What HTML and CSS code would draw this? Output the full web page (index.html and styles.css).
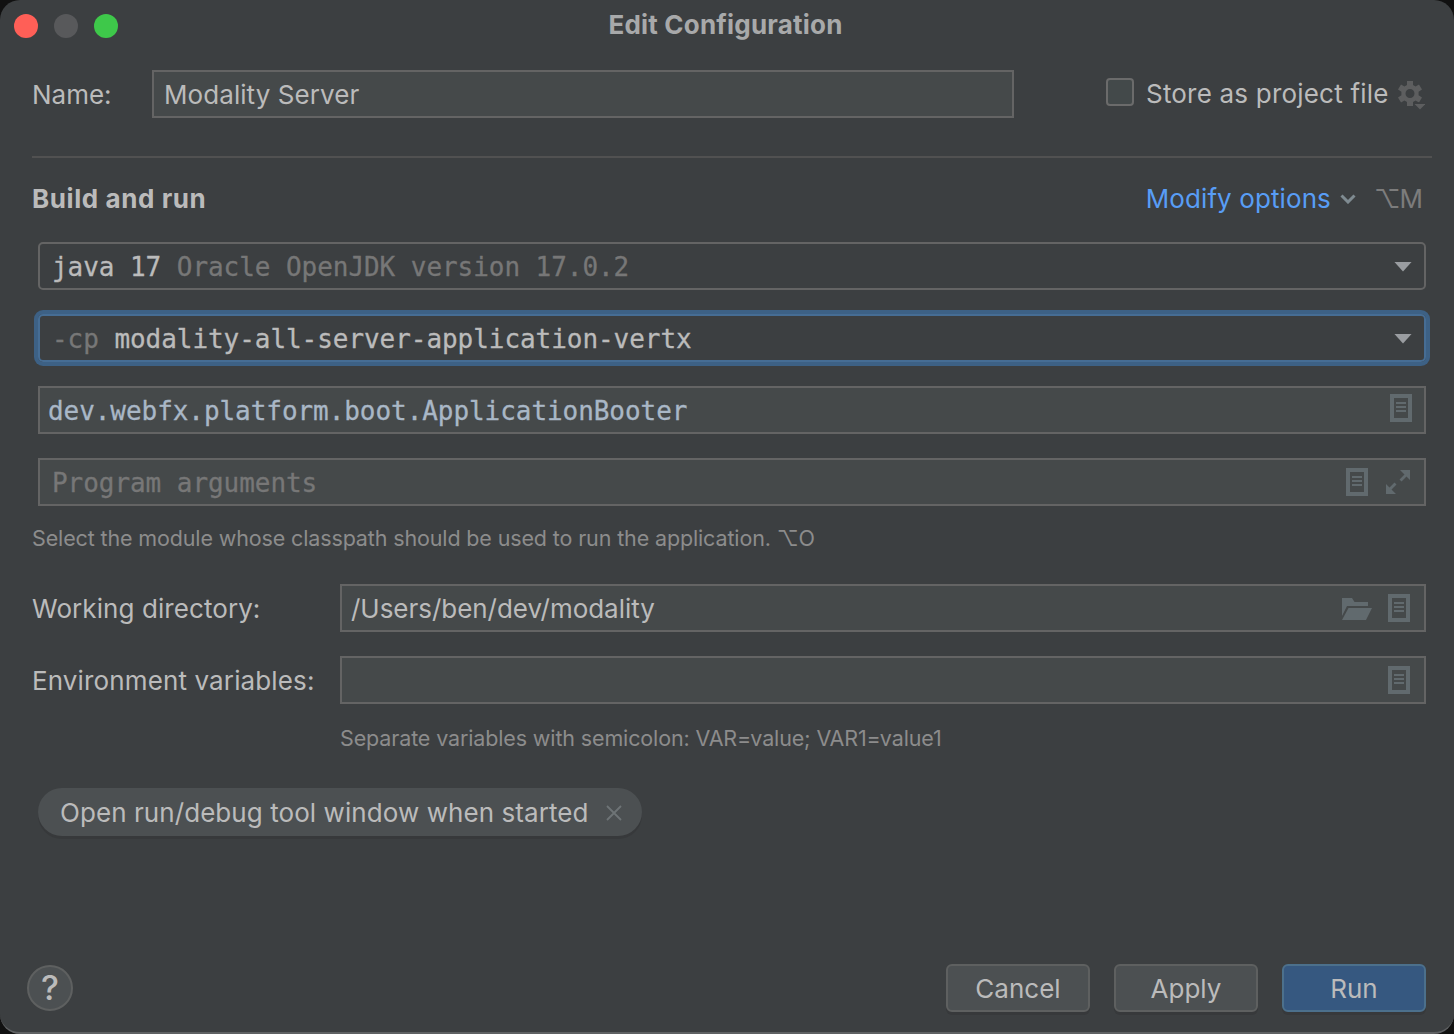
FILE: index.html
```html
<!DOCTYPE html>
<html lang="en">
<head>
<meta charset="utf-8">
<title>Edit Configuration</title>
<link rel="stylesheet" href="styles.css">
</head>
<body>
<svg class="sprite" aria-hidden="true">
  <symbol id="doc" viewBox="0 0 22 28"><path fill-rule="evenodd" d="M0 0h22v28H0zM4 4v20h14V4z"/><path d="M6 8h10v2H6zM6 12h10v2H6zM6 16h10v2H6z"/></symbol>
</svg>
<main class="window">
  <header class="titlebar">
    <div class="lights"><i class="light close"></i><i class="light minimize"></i><i class="light zoom"></i></div>
    <h1 class="title">Edit Configuration</h1>
  </header>

  <section class="name-row">
    <label class="name-label">Name:</label>
    <div class="field name-field"><span class="t name-value">Modality Server</span></div>
    <div class="store">
      <i class="checkbox"></i>
      <span class="t store-label">Store as project file</span>
      <svg class="gear" viewBox="0 0 28 30" width="28" height="30">
        <path fill-rule="evenodd" d="M10 1h6v4l2.500 1.400L22 4.500l3 5-3.400 2.200v3.600L25 17.500l-3 5-3.500-1.900L16 22v4h-6v-4l-2.500-1.400L4 22.500l-3-5 3.400-2.200v-3.600L1 9.500l3-5 3.500 1.900L10 5zM13 9a4.500 4.500 0 1 0 0 9 4.500 4.500 0 0 0 0-9z"/>
        <path d="M16.500 22.500h13L23 30z" class="gear-gap"/><path d="M17.500 24h11L23 29.500z"/>
      </svg>
    </div>
  </section>

  <section class="build-head">
    <h2 class="heading">Build and run</h2>
    <a class="modify"><span class="t modify-text">Modify options</span>
      <svg viewBox="0 0 16 10" width="16" height="10"><path d="M1.500 1.500L8 8l6.500-6.500"/></svg></a>
    <span class="t shortcut">⌥M</span>
  </section>

  <section class="run-fields">
    <div class="combo"><span class="t mono"><b>java 17</b> Oracle OpenJDK version 17.0.2</span><i class="arrow"></i></div>
    <div class="combo focused"><span class="t mono">-cp <b>modality-all-server-application-vertx</b></span><i class="arrow"></i></div>
    <div class="field code"><span class="t mono main-class">dev.webfx.platform.boot.ApplicationBooter</span><svg class="doc up" width="22" height="28"><use href="#doc"/></svg></div>
    <div class="field code args"><span class="t mono">Program arguments</span>
      <span class="icons"><svg class="doc" width="22" height="28"><use href="#doc"/></svg>
      <svg class="expand" viewBox="0 0 24 24" width="24" height="24"><path d="M14 0h10v10l-3.500-3.500-5 5-2-2 5-5zM0 24V14l3.500 3.500 5-5 2 2-5 5L10 24z"/></svg></span>
    </div>
  </section>
  <p class="hint module-hint">Select the module whose classpath should be used to run the application. ⌥O</p>

  <section class="env">
    <label class="wd-label">Working directory:</label>
    <div class="field"><span class="t path">/Users/ben/dev/modality</span>
      <span class="icons wd-icons"><svg class="folder" viewBox="0 0 30 22" width="30" height="22"><path d="M0 0h10l2.500 4H26v4H5L0 18z"/><path d="M6.500 10H30l-6 12H0z"/></svg>
      <svg class="doc" width="22" height="28"><use href="#doc"/></svg></span></div>
    <label class="env-label">Environment variables:</label>
    <div class="field"><span class="icons"><svg class="doc" width="22" height="28"><use href="#doc"/></svg></span></div>
  </section>
  <p class="hint env-hint">Separate variables with semicolon: VAR=value; VAR1=value1</p>

  <div class="tag"><span class="t">Open run/debug tool window when started</span>
    <svg viewBox="0 0 16 16" width="16" height="16"><path d="M1 1l14 14M15 1L1 15"/></svg></div>

  <footer class="footer">
    <span class="help">?</span>
    <div class="buttons">
      <span class="btn">Cancel</span><span class="btn">Apply</span><span class="btn primary">Run</span>
    </div>
  </footer>
</main>
</body>
</html>
```
FILE: styles.css
```css
* { box-sizing: border-box; }
body { margin: 0; background: #111; font-family: Inter, "Noto Sans", sans-serif; font-size: 26px; line-height: 32px; color: #bbb; }
h1, h2, p { margin: 0; }
.sprite { display: none; }
.t { white-space: pre; }
.window { width: 1454px; height: 1034px; background: #3c3f41; border-bottom: 2px solid #5f6163; border-radius: 20px; overflow: hidden; display: flex; flex-direction: column; }
.titlebar { height: 50px; flex: none; display: grid; grid-template-columns: 200px 1fr 200px; align-items: center; }
.lights { display: flex; gap: 16px; padding: 2px 0 0 14px; }
.light { width: 24px; height: 24px; border-radius: 50%; }
.close { background: #ff5f57; }
.minimize { background: #58595b; }
.zoom { background: #3ec84a; }
.title { font-size: 26px; font-weight: 700; letter-spacing: 0.2px; color: #a8a9aa; text-align: center; padding-right: 3px; }
.name-row { flex: none; height: 108px; margin: 0 22px 0 32px; padding-top: 20px; border-bottom: 2px solid #515151; display: flex; align-items: flex-start; }
.name-label { width: 120px; padding-top: 9px; }
.field { height: 48px; border: 2px solid #646464; background: #45494a; display: flex; align-items: center; justify-content: space-between; padding: 0 14px 0 10px; }
.name-field { width: 862px; }
.name-value { letter-spacing: 0.07px; padding-top: 2px; }
.store { margin-left: 92px; display: flex; align-items: flex-start; padding-top: 7px; }
.checkbox { width: 28px; height: 28px; margin: 1px 12px 0 0; border: 2px solid #6b6b6b; border-radius: 4px; background: #43494a; }
.store-label { width: 242px; letter-spacing: 0.2px; padding-top: 1px; }
.gear { margin: 3px 0 0 9px; fill: #5d5e5f; flex: none; }
.gear-gap { fill: #3c3f41; }
.build-head { flex: none; display: flex; align-items: center; height: 84px; padding: 0 32px 2px; }
.heading { font-size: 26px; font-weight: 700; letter-spacing: 0.58px; flex: 1; }
.modify { color: #589df6; display: flex; align-items: center; gap: 9px; letter-spacing: 0.1px; }
.modify svg { fill: none; stroke: #7f8b91; stroke-width: 3; }
.shortcut { color: #7c7c7c; margin-left: 18px; letter-spacing: -1px; }
.run-fields { flex: none; display: flex; flex-direction: column; gap: 24px; padding: 0 28px 0 38px; }
.combo { height: 48px; border: 2px solid #646464; border-radius: 5px; display: flex; align-items: center; justify-content: space-between; padding: 0 12px; color: #777; }
.focused { border-color: #466d94; box-shadow: 0 0 0 4px #3d6185; }
.mono { font-family: "DejaVu Sans Mono", monospace; letter-spacing: -0.053px; padding-top: 2px; -webkit-text-stroke: 0.3px currentColor; }
.mono b { font-weight: 400; color: #bbb; }
.arrow { width: 18px; height: 10px; margin-top: 1px; background: #9a9da1; clip-path: polygon(0 0, 100% 0, 50% 100%); }
.code { padding: 0 12px 0 8px; }
.main-class { color: #a9b7c6; letter-spacing: -0.06px; }
.args { color: #777; padding: 0 14px 0 12px; }
.icons { display: flex; align-items: center; gap: 18px; margin-left: auto; }
.wd-icons { gap: 16px; }
.doc, .folder { fill: #616a6e; }
.folder { margin-top: 2px; }
.up { margin-top: -4px; }
.expand { fill: #616a6e; }
.hint { flex: none; font-size: 21.5px; line-height: 28px; letter-spacing: -0.135px; color: #8c8c8c; }
.module-hint { padding: 18px 0 0 32px; height: 78px; }
.env { flex: none; display: grid; grid-template-columns: 308px 1086px; row-gap: 24px; margin-left: 32px; align-items: center; }
.wd-label { letter-spacing: 0.08px; padding-top: 2px; }
.env-label { letter-spacing: 0.13px; padding-top: 2px; }
.path { letter-spacing: -0.03px; margin-left: -1px; padding-top: 2px; }
.env-hint { padding: 20px 0 0 340px; height: 84px; }
.tag { flex: none; width: 604px; height: 48px; margin-left: 38px; border-radius: 24px; background: #4c5052; box-shadow: 0 3px 0 #37393b; display: flex; align-items: center; justify-content: space-between; padding: 2px 20px 0 22px; letter-spacing: 0.07px; }
.tag svg { stroke: #6e7476; stroke-width: 1.8; }
.footer { flex: 1; display: flex; justify-content: space-between; align-items: flex-end; padding: 0 28px 20px 27px; }
.help { width: 46px; height: 46px; border: 2px solid #5e6060; border-radius: 50%; background: #4c5052; display: grid; place-items: center; font-size: 34px; font-weight: 500; margin-bottom: 1px; }
.buttons { display: flex; gap: 24px; }
.btn { width: 144px; height: 48px; border: 2px solid #5e6060; border-radius: 6px; background: #4c5052; box-shadow: 0 3px 0 #37393b; display: grid; place-items: center; padding-top: 2px; }
.primary { background: #365880; border-color: #4c708c; }
```
